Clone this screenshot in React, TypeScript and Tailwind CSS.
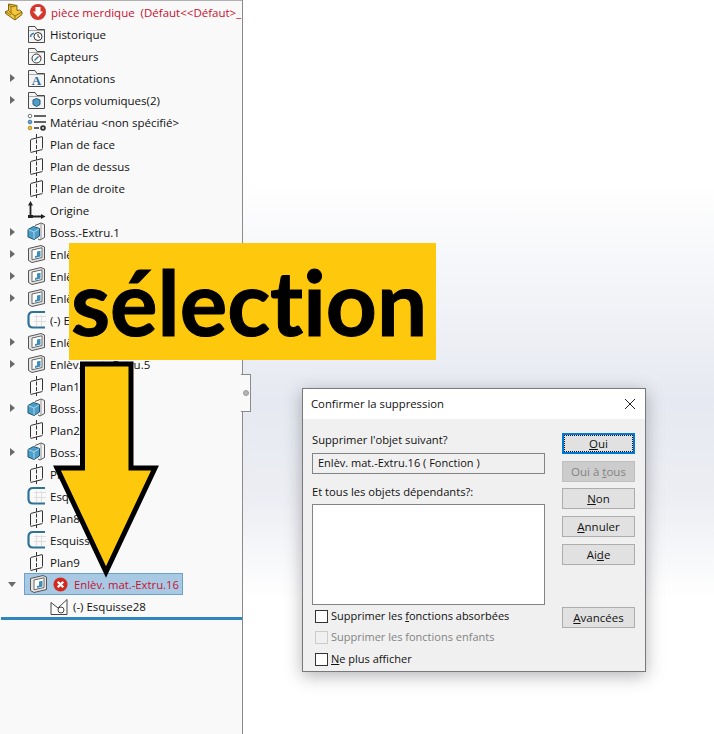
const ui = { fontFamily: '"Open Sans", "Noto Sans", sans-serif' };

function Folder({ children }: { children?: React.ReactNode }) {
  return (
    <svg width="19" height="19" viewBox="0 0 19 19" fill="none">
      <path d="M1.500 17.500V1.500h6.500l2 3h7.500v13z" fill="#f4f4f4" stroke="#4a4a4a" />
      <path d="M2 5.500h15" stroke="#aaa" />
      {children}
    </svg>
  );
}

function PlaneIcon() {
  return (
    <svg width="19" height="20" viewBox="0 0 19 20" fill="none">
      <path d="M3.500 5.500L15.500 2.500V15.500L3.500 18.500Z" stroke="#333" />
      <path d="M9.500 0v20" stroke="#333" strokeDasharray="4 1.500" />
      <path d="M3 5h1M15 2h1M3 18h1M15 15h1" stroke="#f9f9f9" />
    </svg>
  );
}

function BossIcon() {
  return (
    <svg width="19" height="20" viewBox="0 0 19 20" fill="none">
      <path d="M8 3.500L14 1L17.500 2.500V15.500L13 18L11 17" fill="#f4f4f4" stroke="#555" />
      <path d="M14 2V17" stroke="#999" />
      <path d="M1 7.500L6.500 4.500L12.500 6.500V14L7 17.500L1 15Z" fill="#4c9dc8" stroke="#1f5676" />
      <path d="M1.500 7.800L7 10L12 7M7 10V17" stroke="#a9d6ec" />
    </svg>
  );
}

function CutIcon() {
  return (
    <svg width="19" height="20" viewBox="0 0 19 20" fill="none">
      <path d="M1.500 4.500L14 1.500L17.500 3V15.500L5 18.500L1.500 16.500Z" fill="#e6e6e6" stroke="#555" />
      <path d="M5 6L15 3.800V13.500L5 15.800Z" fill="#fff" stroke="#666" />
      <path d="M10 7.500L13.500 6.700V12.500L8 14V12L10 11.500Z" fill="#3d8db8" />
    </svg>
  );
}

function SketchIcon() {
  return (
    <svg width="19" height="20" viewBox="0 0 19 20" fill="none">
      <path d="M7 6.500H19M7 11.500H19M9.500 5V16M14.500 5V16" stroke="#dedede" />
      <path d="M18 2H6Q1.500 2 1.500 6.500V13Q1.500 17.500 6 17.500H18" stroke="#2f7296" strokeWidth="2.200" />
    </svg>
  );
}

function Twisty({ open }: { open?: boolean }) {
  if (open) {
    return <span className="w-0 h-0 border-x-[4px] border-x-transparent border-t-[5px] border-t-[#6a6a6a]" />;
  }
  return <span className="w-0 h-0 border-y-[4px] border-y-transparent border-l-[5px] border-l-[#6a6a6a]" />;
}

type Row = { label: string; icon: React.ReactNode; twisty?: boolean };

const plan = <PlaneIcon />;
const boss = <BossIcon />;
const cut = <CutIcon />;
const sketch = <SketchIcon />;

const rows: Row[] = [
  {
    label: "Historique",
    icon: (
      <Folder>
        <circle cx="11" cy="11.500" r="4" fill="#fff" stroke="#333" />
        <path d="M11 9v2.500l2 1" stroke="#333" />
        <path d="M3.500 12a3.500 3.500 0 0 1 3.500-3.500" stroke="#2f7fb0" strokeWidth="1.600" />
      </Folder>
    ),
  },
  {
    label: "Capteurs",
    icon: (
      <Folder>
        <circle cx="9.500" cy="11.500" r="4.500" fill="#fff" stroke="#333" />
        <path d="M7.500 13.500L11.500 9.500" stroke="#2f7fb0" strokeWidth="1.500" />
        <path d="M12 8.500l1 1" stroke="#d33" strokeWidth="1.500" />
      </Folder>
    ),
  },
  {
    label: "Annotations",
    twisty: true,
    icon: (
      <Folder>
        <text x="9.500" y="16" textAnchor="middle" fontSize="13" fontWeight="700" fontFamily='"Liberation Serif", serif' fill="#2a6f9e">
          A
        </text>
      </Folder>
    ),
  },
  {
    label: "Corps volumiques(2)",
    twisty: true,
    icon: (
      <Folder>
        <path d="M6 9l3.500-1.500L13 9v4.500L9.500 15.500 6 13.500Z" fill="#4f9fc9" stroke="#24597a" />
      </Folder>
    ),
  },
  {
    label: "Matériau <non spécifié>",
    icon: (
      <svg width="20" height="19" viewBox="0 0 20 19" fill="none">
        <circle cx="3" cy="3" r="1.800" fill="#fff" stroke="#777" />
        <circle cx="3" cy="9" r="1.800" fill="#6aa9d4" stroke="#3c7aa6" />
        <circle cx="3" cy="15" r="1.800" fill="#eec232" stroke="#b8901a" />
        <path d="M7 3h12M7 9h12M7 15h5" stroke="#333" strokeWidth="1.500" />
        <circle cx="16" cy="15" r="2.800" fill="#333" />
        <circle cx="16" cy="15" r="0.900" fill="#fff" />
      </svg>
    ),
  },
  { label: "Plan de face", icon: plan },
  { label: "Plan de dessus", icon: plan },
  { label: "Plan de droite", icon: plan },
  {
    label: "Origine",
    icon: (
      <svg width="19" height="19" viewBox="0 0 19 19" fill="none">
        <path d="M3.500 3v12.500H15" stroke="#222" strokeWidth="1.800" />
        <path d="M3.500 0L1 4.500h5zM18.500 15.500L14 13v5z" fill="#222" />
        <rect x="1" y="14" width="5" height="3" fill="#222" />
      </svg>
    ),
  },
  { label: "Boss.-Extru.1", icon: boss, twisty: true },
  { label: "Enlèv. mat.-Extru.1", icon: cut, twisty: true },
  { label: "Enlèv. mat.-Extru.2", icon: cut, twisty: true },
  { label: "Enlèv. mat.-Extru.3", icon: cut, twisty: true },
  { label: "(-) Esquisse7", icon: sketch },
  { label: "Enlèv. mat.-Extru.4", icon: cut, twisty: true },
  { label: "Enlèv. mat.-Extru.5", icon: cut, twisty: true },
  { label: "Plan1", icon: plan },
  { label: "Boss.-Extru.2", icon: boss, twisty: true },
  { label: "Plan2", icon: plan },
  { label: "Boss.-Extru.3", icon: boss, twisty: true },
  { label: "Plan7", icon: plan },
  { label: "Esquisse20", icon: sketch },
  { label: "Plan8", icon: plan },
  { label: "Esquisse25", icon: sketch },
  { label: "Plan9", icon: plan },
];

function TreeRow({ row }: { row: Row }) {
  return (
    <div className="flex items-center h-[22px]">
      <span className="w-[27px] pl-[10px] flex items-center">{row.twisty && <Twisty />}</span>
      <span className="w-[23px] flex items-center">{row.icon}</span>
      <span className="pt-[2px] text-[11.5px] text-[#111] whitespace-nowrap">{row.label}</span>
    </div>
  );
}

function Btn({ children, disabled, primary }: { children: React.ReactNode; disabled?: boolean; primary?: boolean }) {
  if (primary) {
    return (
      <button className="block h-[21px] w-[73px] bg-[#e1e1e1] border-2 border-[#0078d7] text-[11.5px] text-[#111]">
        <span className="flex items-center justify-center w-full h-full border border-dotted border-[#111]">{children}</span>
      </button>
    );
  }
  return (
    <button
      className={
        disabled
          ? "block h-[21px] w-[73px] bg-[#cccccc] border border-[#bfbfbf] text-[11.5px] text-[#838383]"
          : "block h-[21px] w-[73px] bg-[#e1e1e1] border border-[#adadad] text-[11.5px] text-[#111]"
      }
    >
      {children}
    </button>
  );
}

function Check({ label, disabled }: { label: React.ReactNode; disabled?: boolean }) {
  return (
    <div className="flex items-center h-[13px] gap-[3px]">
      <span className={disabled ? "w-[13px] h-[13px] border border-[#cccccc] bg-[#f0f0f0]" : "w-[13px] h-[13px] border border-[#333] bg-white"} />
      <span className={disabled ? "text-[11px] text-[#838383] whitespace-nowrap" : "text-[11px] text-[#111] whitespace-nowrap"}>{label}</span>
    </div>
  );
}

function Dialog() {
  return (
    <div className="absolute left-[302px] top-[388px] w-[344px] h-[284px] border border-[#77797c] bg-[#f0f0f0] shadow-[0_4px_16px_rgba(40,40,50,0.35)]">
      <div className="h-[30px] bg-white flex items-center justify-between pl-[8px] pr-[9px]">
        <span className="text-[11.3px] text-[#111]">Confirmer la suppression</span>
        <svg width="12" height="12" viewBox="0 0 12 12" fill="none">
          <path d="M1 1l10 10M11 1L1 11" stroke="#222" />
        </svg>
      </div>
      <div className="flex pl-[9px] pt-[14px]">
        <div className="w-[233px] flex flex-col">
          <span className="text-[11.2px] leading-[14px] text-[#111] h-[20px]">Supprimer l'objet suivant?</span>
          <div className="h-[21px] border border-[#838383] bg-[#f0f0f0] px-[5px] flex items-center text-[11px] text-[#111]">
            Enlèv. mat.-Extru.16 ( Fonction )
          </div>
          <span className="text-[11.2px] leading-[16px] text-[#111] mt-[10px] h-[20px]">Et tous les objets dépendants?:</span>
          <div className="h-[101px] border border-[#838383] bg-white" />
          <div className="flex flex-col pl-[3px] mt-[5px]">
            <Check label={<>Supprimer les <u>f</u>onctions absorbées</>} />
            <div className="mt-[8px]">
              <Check disabled label="Supprimer les fonctions enfants" />
            </div>
            <div className="mt-[9px]">
              <Check label={<><u>N</u>e plus afficher</>} />
            </div>
          </div>
        </div>
        <div className="ml-[17px] flex flex-col gap-[7px]">
          <Btn primary><u>O</u>ui</Btn>
          <Btn disabled>Oui à <u>t</u>ous</Btn>
          <div className="-mt-[1px]">
            <Btn><u>N</u>on</Btn>
          </div>
          <Btn><u>A</u>nnuler</Btn>
          <Btn>Ai<u>d</u>e</Btn>
          <div className="mt-[35px]">
            <Btn><u>A</u>vancées</Btn>
          </div>
        </div>
      </div>
    </div>
  );
}

export default function App() {
  return (
    <div className="relative w-[714px] h-[734px] overflow-hidden flex bg-[linear-gradient(to_bottom,#ffffff_0,#ffffff_180px,#e6e9f1_400px,#eceef3_500px,#ffffff_600px)]" style={ui}>
      <div className="relative w-[243px] h-full bg-[#f9f9f9] border-r border-[#8a8a8a]">
        <div className="h-[1px] bg-[#b0b0b0]" />
        <div className="flex items-center h-[22px]">
          <span className="w-[5px]" />
          <svg width="18" height="18" viewBox="0 0 18 18" fill="none" className="mr-[7px]">
            <path d="M3.500 1L12 2.500V7.500L14.500 7L17 9V11.500L10 17L0.500 10.500V8.500L3.500 7.500Z" fill="#f3c63b" stroke="#7d6212" strokeLinejoin="round" />
            <path d="M3.500 1L6 4L12 2.500M6 4V10L10 13V17M10 13L17 9M6 10L3.500 7.500M0.500 8.500L6 12" stroke="#8f7116" />
          </svg>
          <svg width="16" height="16" viewBox="0 0 16 16" className="mr-[5px]">
            <circle cx="8" cy="8" r="8" fill="#d4372c" />
            <path d="M5.500 3h5V7.500h2.500L8 13 3 7.500h2.500z" fill="#fff" />
          </svg>
          <span className="pt-[2px] text-[11.5px] text-[#c8102e] whitespace-pre">pièce merdique  (Défaut{"<<"}Défaut{">"}_</span>
        </div>
        {rows.map((row) => (
          <TreeRow key={row.label} row={row} />
        ))}
        <div className="flex items-center h-[22px]">
          <span className="w-[24px] pl-[8px] flex items-center"><Twisty open /></span>
          <div className="flex items-center h-[22px] w-[159px] bg-[#a8c9e4] border border-[#6aa2cc]">
            <span className="w-[28px] pl-[4px] flex items-center"><CutIcon /></span>
            <svg width="15" height="15" viewBox="0 0 16 16" className="mr-[6px]">
              <circle cx="8" cy="8" r="7.500" fill="#d4291f" />
              <path d="M5 5l6 6M11 5l-6 6" stroke="#fff" strokeWidth="2.400" />
            </svg>
            <span className="pt-[2px] text-[11.3px] text-[#c8102e] whitespace-nowrap">Enlèv. mat.-Extru.16</span>
          </div>
        </div>
        <div className="flex items-center h-[22px]">
          <span className="w-[50px]" />
          <svg width="19" height="19" viewBox="0 0 19 19" fill="none" className="mr-[4px]">
            <path d="M1 5.500L8 11l9-8.500V17.500H1Z" fill="#fff" stroke="#444" />
            <circle cx="11" cy="13" r="3" fill="#fff" stroke="#444" />
          </svg>
          <span className="pt-[2px] text-[11.5px] text-[#111]">(-) Esquisse28</span>
        </div>
        <div className="ml-[1px] h-[3px] bg-[#2f86bd]" />
        {/* poignee du panneau */}
        <div className="absolute left-[241px] top-[374px] w-[10px] h-[38px] bg-[#f9f9f9] border border-l-0 border-[#8a8a8a] flex items-center justify-center">
          <span className="w-[6px] h-[6px] rounded-full bg-[#b5b5b5] border border-[#999]" />
        </div>
      </div>

      <div className="absolute left-[69px] top-[243px] w-[367px] h-[117px] bg-[#fec80c] flex items-center justify-center pr-[7px]">
        <span className="text-[89px] leading-none font-bold text-black [font-variant-ligatures:none] [-webkit-text-stroke:1px_#000]" style={{ fontFamily: 'Lato, "Open Sans", sans-serif' }}>sélection</span>
      </div>

      <svg className="absolute left-[50px] top-[359px]" width="114" height="222" viewBox="0 0 114 222" fill="none">
        <path d="M32.500 5H81V109H105L56 213L7 109H32.500Z" fill="#fec80c" stroke="#000" strokeWidth="5" />
      </svg>

      <Dialog />
    </div>
  );
}
